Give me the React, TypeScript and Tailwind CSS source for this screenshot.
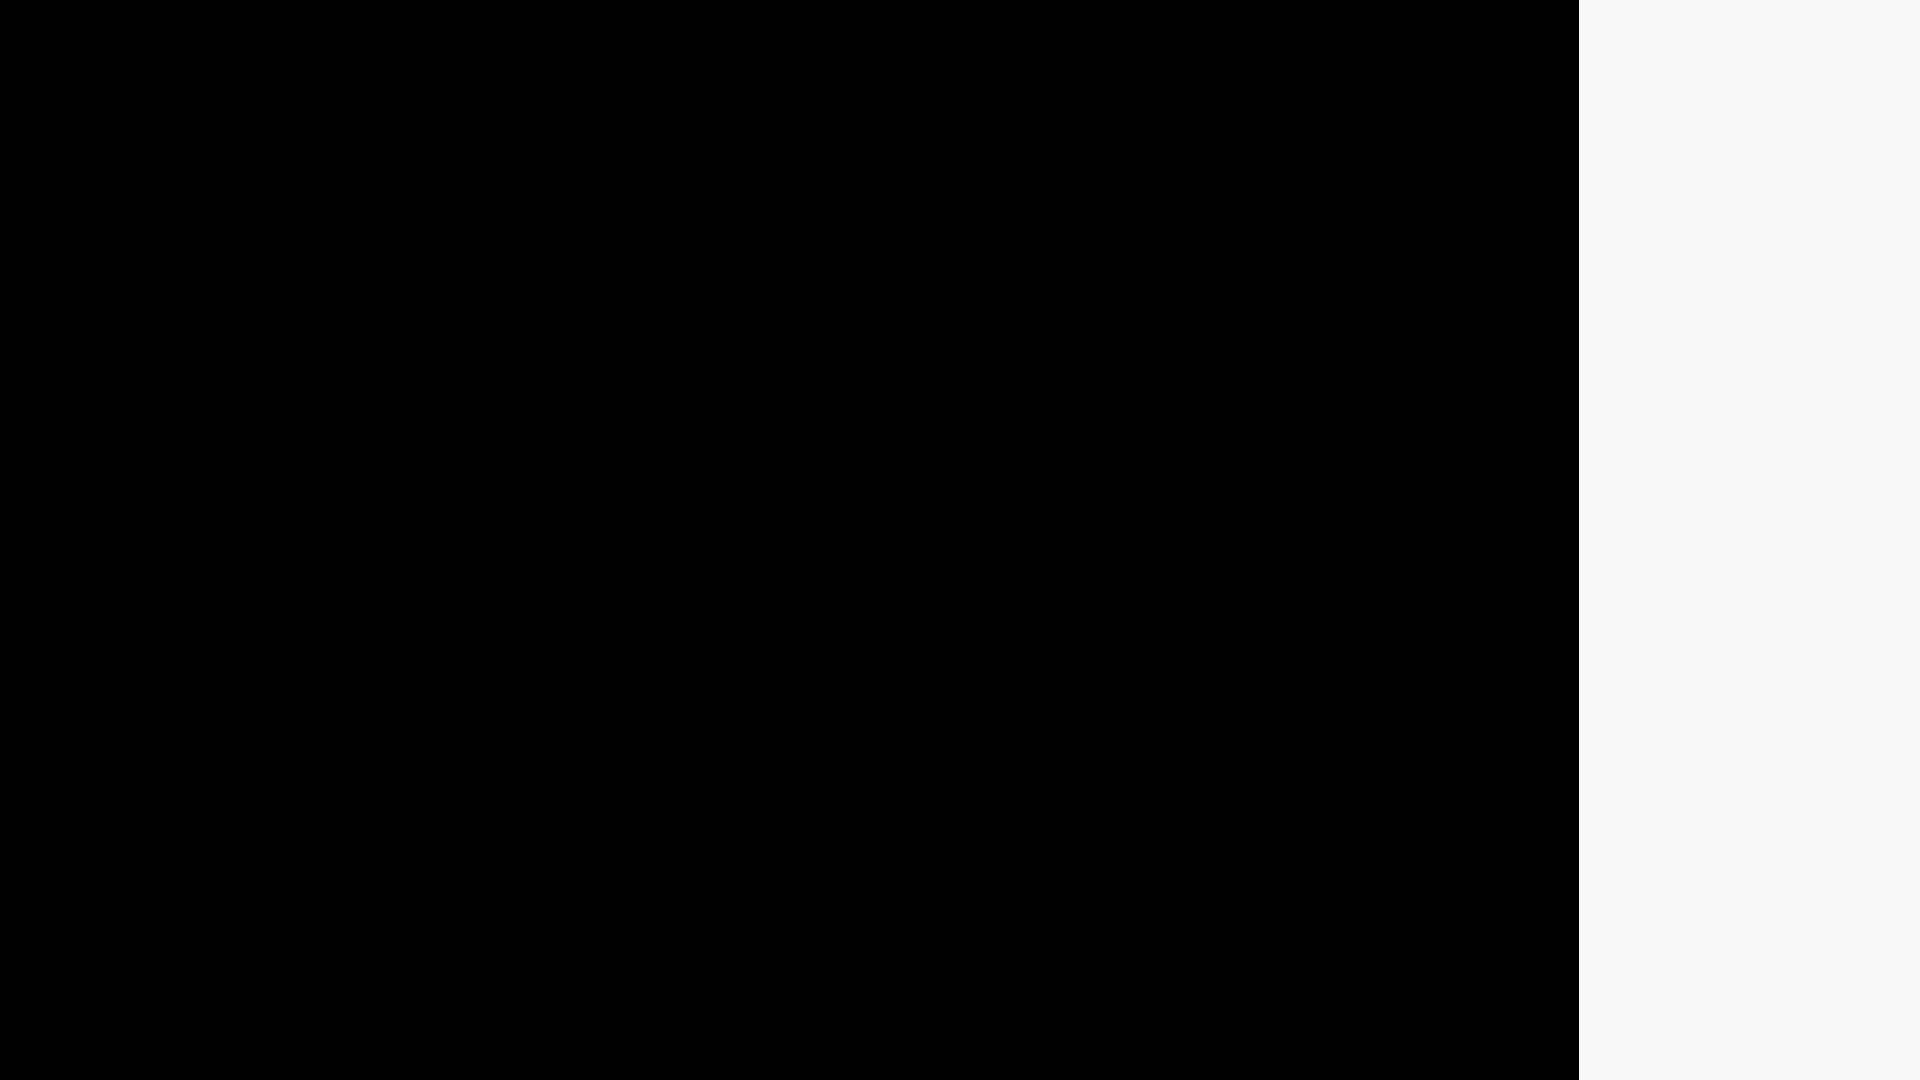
export default function App() {
  return (
    <div className="flex h-screen w-full overflow-hidden">
      {/* Main stage */}
      <main className="h-full w-[1579px] shrink-0 bg-black" />
      {/* Side panel */}
      <aside className="h-full flex-1 bg-[#f8f8f8]" />
    </div>
  )
}
